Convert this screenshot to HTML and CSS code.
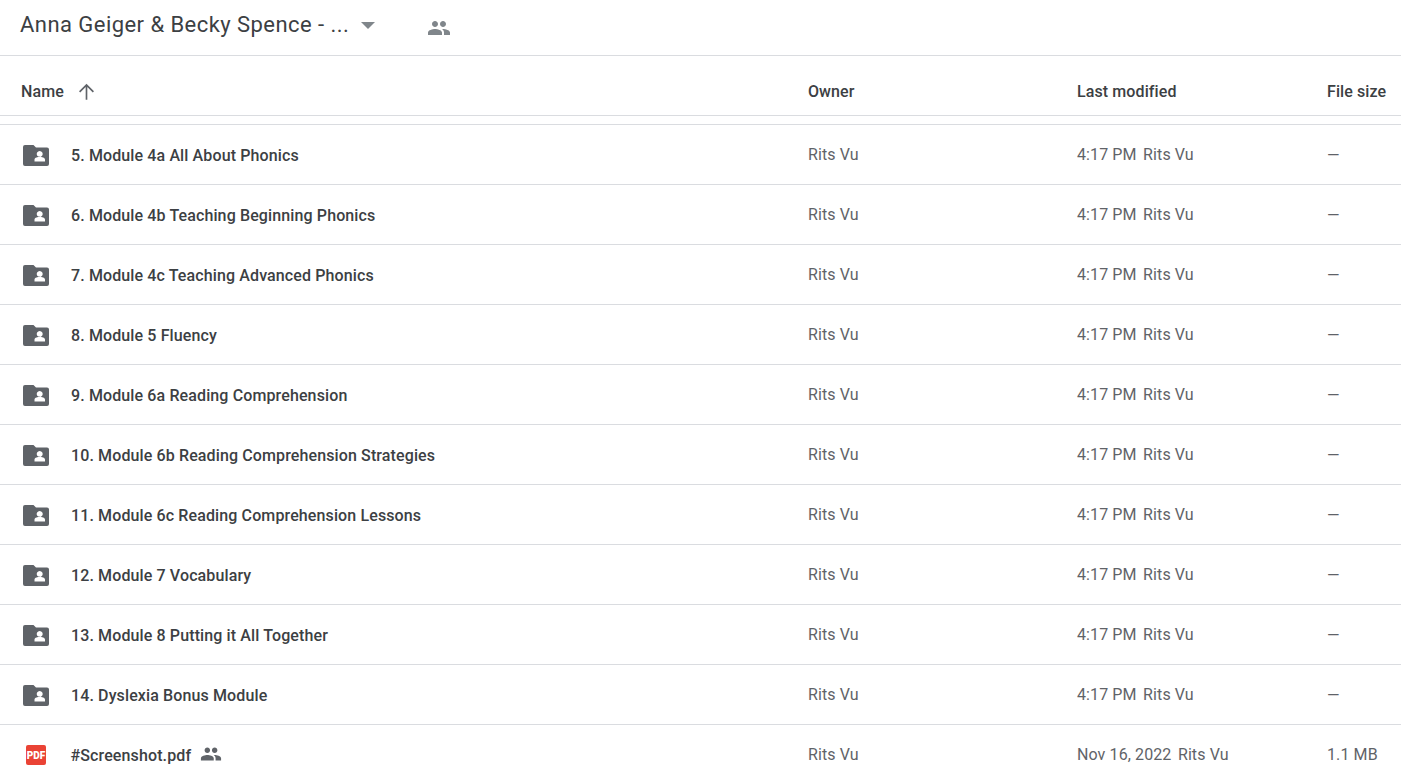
FILE: index.html
```html
<!DOCTYPE html>
<html lang="en">
<head>
<meta charset="utf-8">
<title>Anna Geiger &amp; Becky Spence</title>
<link rel="stylesheet" href="styles.css">
</head>
<body>
<svg class="defs" width="0" height="0">
  <symbol id="folder" viewBox="0 0 26 21"><path fill="#5f6368" fill-rule="evenodd" d="M2 0H10.500l2.500 2.500h11A2 2 0 0 1 26 4.500V19A2 2 0 0 1 24 21H2A2 2 0 0 1 0 19V2A2 2 0 0 1 2 0ZM16.700 6a3 3 0 1 0 .01 0ZM11.500 14.600V16.500H22V14.600c0-1.900-3.500-2.800-5.250-2.800S11.500 12.700 11.500 14.600Z"/></symbol>
  <symbol id="people" viewBox="0 0 24 24"><path d="M16 11c1.660 0 2.990-1.340 2.990-3S17.660 5 16 5s-3 1.340-3 3 1.340 3 3 3zm-8 0c1.660 0 2.990-1.340 2.990-3S9.660 5 8 5 5 6.340 5 8s1.340 3 3 3zm0 2c-2.330 0-7 1.170-7 3.500V19h14v-2.500C15 14.170 10.330 13 8 13zm8 0c-.29 0-.62.020-.97.050 1.160.84 1.970 1.970 1.970 3.450V19h6v-2.500c0-2.330-4.670-3.500-7-3.500z"/></symbol>
</svg>
<header class="topbar">
  <h1 class="title">Anna Geiger &amp; Becky Spence - ...</h1>
  <span class="caret"></span>
  <svg class="people people-top"><use href="#people"/></svg>
</header>
<div class="row head">
  <div class="name-cell"><span class="head-name">Name</span>
    <svg class="arrow" viewBox="0 0 16 16"><path d="M8 1.500 1.700 7.800l1 1L7.300 4.200V15h1.400V4.200l4.600 4.600 1-1Z"/></svg>
  </div>
  <div>Owner</div><div>Last modified</div><div>File size</div>
</div>
<div class="spacer"></div>
<main class="list">
  <div class="row item"><div class="name-cell"><svg class="folder"><use href="#folder"/></svg><span class="fname">5. Module 4a All About Phonics</span></div><div>Rits Vu</div><div class="mod">4:17 PM<span>Rits Vu</span></div><div class="dash">—</div></div>
  <div class="row item"><div class="name-cell"><svg class="folder"><use href="#folder"/></svg><span class="fname">6. Module 4b Teaching Beginning Phonics</span></div><div>Rits Vu</div><div class="mod">4:17 PM<span>Rits Vu</span></div><div class="dash">—</div></div>
  <div class="row item"><div class="name-cell"><svg class="folder"><use href="#folder"/></svg><span class="fname">7. Module 4c Teaching Advanced Phonics</span></div><div>Rits Vu</div><div class="mod">4:17 PM<span>Rits Vu</span></div><div class="dash">—</div></div>
  <div class="row item"><div class="name-cell"><svg class="folder"><use href="#folder"/></svg><span class="fname">8. Module 5 Fluency</span></div><div>Rits Vu</div><div class="mod">4:17 PM<span>Rits Vu</span></div><div class="dash">—</div></div>
  <div class="row item"><div class="name-cell"><svg class="folder"><use href="#folder"/></svg><span class="fname">9. Module 6a Reading Comprehension</span></div><div>Rits Vu</div><div class="mod">4:17 PM<span>Rits Vu</span></div><div class="dash">—</div></div>
  <div class="row item"><div class="name-cell"><svg class="folder"><use href="#folder"/></svg><span class="fname">10. Module 6b Reading Comprehension Strategies</span></div><div>Rits Vu</div><div class="mod">4:17 PM<span>Rits Vu</span></div><div class="dash">—</div></div>
  <div class="row item"><div class="name-cell"><svg class="folder"><use href="#folder"/></svg><span class="fname">11. Module 6c Reading Comprehension Lessons</span></div><div>Rits Vu</div><div class="mod">4:17 PM<span>Rits Vu</span></div><div class="dash">—</div></div>
  <div class="row item"><div class="name-cell"><svg class="folder"><use href="#folder"/></svg><span class="fname">12. Module 7 Vocabulary</span></div><div>Rits Vu</div><div class="mod">4:17 PM<span>Rits Vu</span></div><div class="dash">—</div></div>
  <div class="row item"><div class="name-cell"><svg class="folder"><use href="#folder"/></svg><span class="fname">13. Module 8 Putting it All Together</span></div><div>Rits Vu</div><div class="mod">4:17 PM<span>Rits Vu</span></div><div class="dash">—</div></div>
  <div class="row item"><div class="name-cell"><svg class="folder"><use href="#folder"/></svg><span class="fname">14. Dyslexia Bonus Module</span></div><div>Rits Vu</div><div class="mod">4:17 PM<span>Rits Vu</span></div><div class="dash">—</div></div>
  <div class="row item"><div class="name-cell"><span class="pdf">PDF</span><span class="fname">#Screenshot.pdf</span><svg class="people people-row"><use href="#people"/></svg></div><div>Rits Vu</div><div class="mod">Nov 16, 2022<span>Rits Vu</span></div><div>1.1 MB</div></div>
</main>
</body>
</html>
```
FILE: styles.css
```css
* { box-sizing: border-box; }
html, body { margin: 0; height: 780px; overflow: hidden; }
body { background: #fff; font-family: Roboto, "Liberation Sans", sans-serif; color: #5f6368; }
.defs { position: absolute; }
.topbar { height: 56px; border-bottom: 1px solid #dadce0; display: flex; align-items: center; padding: 0 0 7px 20px; }
.title { margin: 0; font-size: 22px; font-weight: 400; color: #3c4043; letter-spacing: 0.45px; white-space: nowrap; width: 341px; }
.caret { width: 0; height: 0; border-left: 7px solid transparent; border-right: 7px solid transparent; border-top: 7px solid #80868b; margin-top: 3px; }
.people { fill: #80868b; display: block; }
.people-top { width: 24px; height: 24px; margin: 7px 0 0 52px; }
.row { display: grid; grid-template-columns: 808px 269px 250px 1fr; align-items: center; font-size: 16px; }
.head { height: 60px; padding-top: 12px; border-bottom: 1px solid #dadce0; color: #3c4043; font-weight: 500; letter-spacing: 0.1px; }
.name-cell { display: flex; align-items: center; }
.head-name { margin-left: 21px; }
.arrow { width: 19px; height: 19px; margin-left: 13px; fill: #5f6368; }
.spacer { height: 9px; border-bottom: 1px solid #dadce0; }
.item { height: 60px; border-bottom: 1px solid #dadce0; letter-spacing: 0.1px; }
.folder { width: 26px; height: 21px; margin: 2px 0 0 23px; }
.fname { margin-left: 22px; padding-top: 2px; font-weight: 500; color: #3c4043; letter-spacing: 0.12px; }
.mod span { margin-left: 6.5px; }
.dash { padding-top: 2px; }
.pdf { width: 20px; height: 20px; margin: 1px 0 0 26px; border-radius: 2px; background: #ea4335; color: #fff; font-size: 10px; font-weight: 900; display: flex; align-items: center; justify-content: center; letter-spacing: 0; }
.pdf + .fname { margin-left: 24.5px; }
.people-row { width: 22px; height: 22px; margin-left: 9px; margin-top: -2px; fill: #5f6368; }
```
